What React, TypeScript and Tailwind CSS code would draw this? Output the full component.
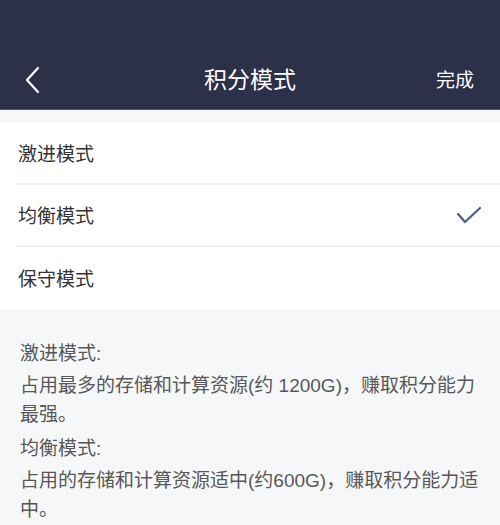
const modes = ['激进模式', '均衡模式', '保守模式']

const notes = [
  { label: '激进模式:', text: '占用最多的存储和计算资源(约 1200G)，赚取积分能力最强。' },
  { label: '均衡模式:', text: '占用的存储和计算资源适中(约600G)，赚取积分能力适中。' },
]

function BackIcon() {
  return (
    <svg width="16" height="28" viewBox="0 0 16 28" fill="none">
      <path d="M14 2 L3 14 L14 26" stroke="#ffffff" strokeWidth="2.2" strokeLinecap="round" strokeLinejoin="round" />
    </svg>
  )
}

function CheckIcon() {
  return (
    <svg width="26" height="20" viewBox="0 0 26 20" fill="none">
      <path d="M2 9 L9 17 L24 3" stroke="#4b5d8e" strokeWidth="2.2" strokeLinecap="round" strokeLinejoin="round" />
    </svg>
  )
}

export default function App() {
  const selected = 1
  return (
    <div
      className="w-[500px] h-[525px] overflow-hidden bg-[#f6f7f9] flex flex-col"
      style={{ fontFamily: '"Noto Sans CJK SC", "Noto Sans", sans-serif' }}
    >
      <header className="h-[110px] shrink-0 bg-[#2c3049] border-b border-[#565a6e] flex flex-col">
        <div className="h-[50px]" />
        <div className="flex-1 flex items-center px-6 relative">
          <BackIcon />
          <div className="absolute inset-x-0 top-0 bottom-0 flex items-center justify-center pointer-events-none">
            <span className="text-[23px] text-white leading-none pb-[2px]">积分模式</span>
          </div>
          <span className="ml-auto text-[19px] text-white leading-none mr-[2px] pb-[2px]">完成</span>
        </div>
      </header>

      <div className="h-[13px] shrink-0" />

      <ul className="bg-white shrink-0">
        {modes.map((m, i) => (
          <li key={m} className="pl-4">
            <div
              className={
                'h-[62px] flex items-center pr-[18px] ' +
                (i < modes.length - 1 ? 'border-b-2 border-[#f0f0f2]' : '')
              }
            >
              <span className="text-[19px] text-[#333333] pl-[2px]">{m}</span>
              {i === selected && (
                <span className="ml-auto">
                  <CheckIcon />
                </span>
              )}
            </div>
          </li>
        ))}
      </ul>

      <div
        className="pl-5 pr-[12px] pt-[30px] text-[#585858] text-[19px]"
        style={{ fontFamily: '"Liberation Sans", "Noto Sans CJK SC", sans-serif' }}
      >
        {notes.map((n, i) => (
          <div key={n.label} className={i > 0 ? 'mt-[5px]' : ''}>
            <p className="leading-[30px]">{n.label}</p>
            <p className="mt-[2px] leading-[29px]">{n.text}</p>
          </div>
        ))}
      </div>
    </div>
  )
}
